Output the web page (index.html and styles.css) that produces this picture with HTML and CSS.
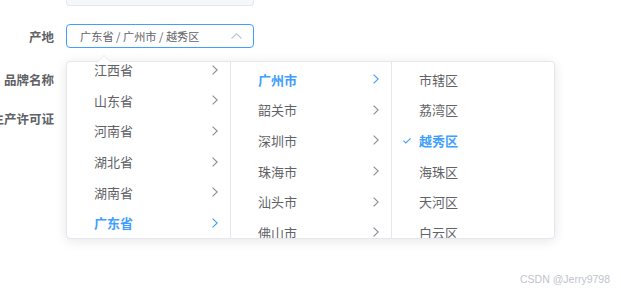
FILE: index.html
```html
<!DOCTYPE html>
<html lang="zh-CN">
<head>
  <meta charset="UTF-8">
  <title>产地选择</title>
  <link rel="stylesheet" href="styles.css">
</head>
<body>
  <div class="form">
    <div class="form-item first">
      <div class="label"></div>
      <div class="stub"></div>
    </div>

    <div class="form-item origin">
      <div class="label">产地</div>
      <div class="cascader">
        <div class="input">
          <span class="value">广东省 / 广州市 / 越秀区</span>
          <svg class="caret" width="11" height="6" viewBox="0 0 11 6"><path d="M0.5 5.5 L5.5 0.8 L10.5 5.5" fill="none" stroke="#c0c4cc" stroke-width="1.1"/></svg>
        </div>

        <!-- dropdown panel -->
        <div class="panel">
          <div class="menu menu-bottom">
            <div class="node">江西省<svg class="arr" width="6" height="10" viewBox="0 0 6 10"><path d="M0.6 0.6 L5.2 5 L0.6 9.4" fill="none" stroke="#8a8d93" stroke-width="1.1"/></svg></div>
            <div class="node">山东省<svg class="arr" width="6" height="10" viewBox="0 0 6 10"><path d="M0.6 0.6 L5.2 5 L0.6 9.4" fill="none" stroke="#8a8d93" stroke-width="1.1"/></svg></div>
            <div class="node">河南省<svg class="arr" width="6" height="10" viewBox="0 0 6 10"><path d="M0.6 0.6 L5.2 5 L0.6 9.4" fill="none" stroke="#8a8d93" stroke-width="1.1"/></svg></div>
            <div class="node">湖北省<svg class="arr" width="6" height="10" viewBox="0 0 6 10"><path d="M0.6 0.6 L5.2 5 L0.6 9.4" fill="none" stroke="#8a8d93" stroke-width="1.1"/></svg></div>
            <div class="node">湖南省<svg class="arr" width="6" height="10" viewBox="0 0 6 10"><path d="M0.6 0.6 L5.2 5 L0.6 9.4" fill="none" stroke="#8a8d93" stroke-width="1.1"/></svg></div>
            <div class="node active">广东省<svg class="arr" width="6" height="10" viewBox="0 0 6 10"><path d="M0.6 0.6 L5.2 5 L0.6 9.4" fill="none" stroke="#409eff" stroke-width="1.1"/></svg></div>
          </div>
          <div class="menu">
            <div class="node active">广州市<svg class="arr" width="6" height="10" viewBox="0 0 6 10"><path d="M0.6 0.6 L5.2 5 L0.6 9.4" fill="none" stroke="#409eff" stroke-width="1.1"/></svg></div>
            <div class="node">韶关市<svg class="arr" width="6" height="10" viewBox="0 0 6 10"><path d="M0.6 0.6 L5.2 5 L0.6 9.4" fill="none" stroke="#8a8d93" stroke-width="1.1"/></svg></div>
            <div class="node">深圳市<svg class="arr" width="6" height="10" viewBox="0 0 6 10"><path d="M0.6 0.6 L5.2 5 L0.6 9.4" fill="none" stroke="#8a8d93" stroke-width="1.1"/></svg></div>
            <div class="node">珠海市<svg class="arr" width="6" height="10" viewBox="0 0 6 10"><path d="M0.6 0.6 L5.2 5 L0.6 9.4" fill="none" stroke="#8a8d93" stroke-width="1.1"/></svg></div>
            <div class="node">汕头市<svg class="arr" width="6" height="10" viewBox="0 0 6 10"><path d="M0.6 0.6 L5.2 5 L0.6 9.4" fill="none" stroke="#8a8d93" stroke-width="1.1"/></svg></div>
            <div class="node">佛山市<svg class="arr" width="6" height="10" viewBox="0 0 6 10"><path d="M0.6 0.6 L5.2 5 L0.6 9.4" fill="none" stroke="#8a8d93" stroke-width="1.1"/></svg></div>
          </div>
          <div class="menu last">
            <div class="node">市辖区</div>
            <div class="node">荔湾区</div>
            <div class="node active"><svg class="check" width="8" height="6" viewBox="0 0 8 6"><path d="M0.4 2.6 L2.8 5 L7.6 0.4" fill="none" stroke="#409eff" stroke-width="1.1"/></svg>越秀区</div>
            <div class="node">海珠区</div>
            <div class="node">天河区</div>
            <div class="node">白云区</div>
          </div>
        </div>
      </div>
    </div>

    <div class="form-item brand">
      <div class="label">品牌名称</div>
    </div>

    <div class="form-item license">
      <div class="label">生产许可证</div>
    </div>
  </div>

  <div class="watermark">CSDN @Jerry9798</div>
</body>
</html>
```

FILE: styles.css
```css
* {
  margin: 0;
  padding: 0;
  box-sizing: border-box;
}

body {
  font-family: "Noto Sans CJK SC", "Noto Sans", sans-serif;
  background: #fff;
  color: #606266;
  width: 621px;
  height: 288px;
  overflow: hidden;
  position: relative;
}

.form {
  display: flex;
  flex-direction: column;
}

.form-item {
  display: flex;
  align-items: center;
  gap: 12px;
  height: 24px;
}

.label {
  width: 54px;
  display: flex;
  justify-content: flex-end;
  white-space: nowrap;
  font-size: 12.5px;
  font-weight: 700;
  color: #606266;
}

.first {
  height: 6px;
  align-items: flex-end;
}

.stub {
  width: 188px;
  height: 7px;
  background: #f5f7fa;
  border: 1px solid #e4e7ed;
  border-top: none;
  border-radius: 0 0 4px 4px;
}

.origin {
  margin-top: 18px;
}

.brand {
  margin-top: 19px;
}

.license {
  margin-top: 15px;
}

.cascader {
  position: relative;
  width: 188px;
  height: 24px;
}

.input {
  height: 24px;
  border: 1px solid #409eff;
  border-radius: 4px;
  display: flex;
  align-items: center;
  justify-content: space-between;
  padding: 0 11px 0 13px;
  font-size: 11.2px;
  color: #606266;
}

.caret {
  display: block;
  margin-top: -1px;
}

.panel {
  position: absolute;
  top: 37px;
  left: 0;
  width: 489px;
  height: 178px;
  background: #fff;
  border: 1px solid #e4e7ed;
  border-radius: 4px;
  box-shadow: 0 2px 12px rgba(0, 0, 0, 0.1);
  display: flex;
  z-index: 2;
}

.panel::before,
.panel::after {
  content: "";
  position: absolute;
  left: 31px;
  width: 0;
  height: 0;
  border: 6px solid transparent;
  border-top-width: 0;
}

.panel::before {
  top: -7px;
  border-bottom-color: #e4e7ed;
}

.panel::after {
  top: -6px;
  border-bottom-color: #fff;
}

.menu {
  width: 164px;
  border-right: 1px solid #e4e7ed;
  padding-top: 2px;
  overflow: hidden;
  display: flex;
  flex-direction: column;
  flex-shrink: 0;
}

.menu + .menu {
  width: 161px;
}

.menu-bottom {
  justify-content: flex-end;
  padding-top: 0;
}

.menu.last {
  flex: 1;
  border-right: none;
}

.node {
  height: 30.6px;
  flex-shrink: 0;
  display: flex;
  align-items: center;
  justify-content: space-between;
  padding: 0 12px 0 27px;
  font-size: 13px;
  color: #606266;
  position: relative;
}

.node.active {
  color: #409eff;
  font-weight: 700;
}

.arr {
  display: block;
}

.check {
  position: absolute;
  left: 11px;
  top: 13px;
}

.watermark {
  position: absolute;
  right: 11px;
  bottom: 3px;
  font-family: "Liberation Sans", Arial, sans-serif;
  font-size: 10.5px;
  color: #c0c4cc;
}
```
